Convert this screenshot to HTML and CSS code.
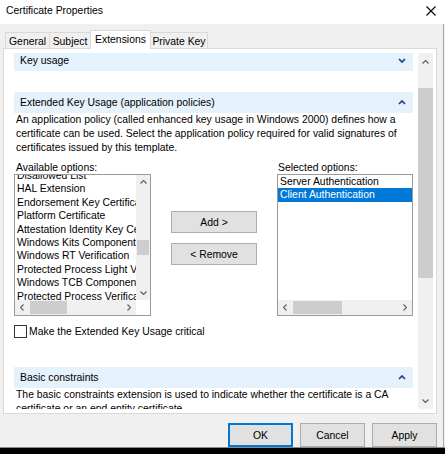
FILE: index.html
```html
<!DOCTYPE html>
<html>
<head>
<meta charset="utf-8">
<link rel="stylesheet" href="styles.css">
</head>
<body>
<div class="window">
  <div class="titlebar">
    <span class="title">Certificate Properties</span>
    <svg class="close" width="10" height="10" viewBox="0 0 10 10"><path d="M0.5 0.5 L9.5 9.5 M9.5 0.5 L0.5 9.5" stroke="#000" stroke-width="1.1" fill="none"/></svg>
  </div>
  <div class="tabs">
    <div class="tab tab-general">General</div>
    <div class="tab tab-subject">Subject</div>
    <div class="tab tab-ext active">Extensions</div>
    <div class="tab tab-pk">Private Key</div>
  </div>
  <div class="panel">
    <div class="viewport">
      <div class="content">
        <section class="sec sec-ku">
          <div class="sec-head"><span>Key usage</span>
            <svg class="chev" width="8" height="5" viewBox="0 0 8 5"><polyline points="1,1 4,4 7,1" fill="none" stroke="#1c3f94" stroke-width="1.7"/></svg>
          </div>
        </section>
        <section class="sec">
          <div class="sec-head"><span>Extended Key Usage (application policies)</span>
            <svg class="chev" width="8" height="5" viewBox="0 0 8 5"><polyline points="1,4 4,1 7,4" fill="none" stroke="#1c3f94" stroke-width="1.7"/></svg>
          </div>
          <p class="desc">An application policy (called enhanced key usage in Windows 2000) defines how a<br>certificate can be used. Select the application policy required for valid signatures of<br>certificates issued by this template.</p>
          <div class="lists">
            <div class="col">
              <div class="lbl">Available options:</div>
              <div class="listbox lb-left">
                <div class="items"><div class="items-inner shift-left">
                  <div class="item">Disallowed List</div>
                  <div class="item">HAL Extension</div>
                  <div class="item">Endorsement Key Certificate</div>
                  <div class="item">Platform Certificate</div>
                  <div class="item">Attestation Identity Key Certificate</div>
                  <div class="item">Windows Kits Component Verification</div>
                  <div class="item">Windows RT Verification</div>
                  <div class="item">Protected Process Light Verification</div>
                  <div class="item">Windows TCB Component</div>
                  <div class="item">Protected Process Verification</div>
                  <div class="item">Windows Store</div>
                </div></div>
                <div class="vs">
                  <div class="sb-btn"><svg width="7" height="4" viewBox="0 0 7 4"><polyline points="0.5,3.5 3.5,0.5 6.5,3.5" fill="none" stroke="#606060" stroke-width="1.2"/></svg></div>
                  <div class="vs-track small-track"><div class="vs-thumb small-thumb"></div></div>
                  <div class="sb-btn"><svg width="7" height="4" viewBox="0 0 7 4"><polyline points="0.5,0.5 3.5,3.5 6.5,0.5" fill="none" stroke="#606060" stroke-width="1.2"/></svg></div>
                </div>
                <div class="hs">
                  <div class="sb-btn"><svg width="4" height="7" viewBox="0 0 4 7"><polyline points="3.5,0.5 0.5,3.5 3.5,6.5" fill="none" stroke="#606060" stroke-width="1.2"/></svg></div>
                  <div class="hs-track"><div class="hs-thumb thumb-left"></div></div>
                  <div class="sb-btn"><svg width="4" height="7" viewBox="0 0 4 7"><polyline points="0.5,0.5 3.5,3.5 0.5,6.5" fill="none" stroke="#606060" stroke-width="1.2"/></svg></div>
                </div>
                <div class="corner"></div>
              </div>
            </div>
            <div class="mid">
              <button class="btn btn-mid">Add &gt;</button>
              <button class="btn btn-mid">&lt; Remove</button>
            </div>
            <div class="col">
              <div class="lbl lbl-right">Selected options:</div>
              <div class="listbox lb-right">
                <div class="items"><div class="items-inner shift-right">
                  <div class="item">Server Authentication</div>
                  <div class="item selected">Client Authentication</div>
                </div></div>
                <div class="hs">
                  <div class="sb-btn"><svg width="4" height="7" viewBox="0 0 4 7"><polyline points="3.5,0.5 0.5,3.5 3.5,6.5" fill="none" stroke="#606060" stroke-width="1.2"/></svg></div>
                  <div class="hs-track"><div class="hs-thumb thumb-right"></div></div>
                  <div class="sb-btn"><svg width="4" height="7" viewBox="0 0 4 7"><polyline points="0.5,0.5 3.5,3.5 0.5,6.5" fill="none" stroke="#606060" stroke-width="1.2"/></svg></div>
                </div>
              </div>
            </div>
          </div>
          <label class="check"><span class="box"></span><span>Make the Extended Key Usage critical</span></label>
        </section>
        <section class="sec sec-basic">
          <div class="sec-head"><span>Basic constraints</span>
            <svg class="chev" width="8" height="5" viewBox="0 0 8 5"><polyline points="1,4 4,1 7,4" fill="none" stroke="#1c3f94" stroke-width="1.7"/></svg>
          </div>
          <p class="desc">The basic constraints extension is used to indicate whether the certificate is a CA<br>certificate or an end entity certificate.</p>
        </section>
      </div>
    </div>
    <div class="vs main-vs">
      <div class="sb-btn main-btn"><svg width="7" height="4" viewBox="0 0 7 4"><polyline points="0.5,3.5 3.5,0.5 6.5,3.5" fill="none" stroke="#606060" stroke-width="1.2"/></svg></div>
      <div class="vs-track main-track"><div class="vs-thumb main-thumb"></div></div>
      <div class="sb-btn main-btn"><svg width="7" height="4" viewBox="0 0 7 4"><polyline points="0.5,0.5 3.5,3.5 6.5,0.5" fill="none" stroke="#606060" stroke-width="1.2"/></svg></div>
    </div>
  </div>
  <div class="footer">
    <button class="btn btn-foot default">OK</button>
    <button class="btn btn-foot">Cancel</button>
    <button class="btn btn-foot">Apply</button>
  </div>
</div>
</body>
</html>
```
FILE: styles.css
```css
* { box-sizing: border-box; }
html, body { margin: 0; padding: 0; }
body {
  background: #000;
  width: 445px;
  height: 454px;
  overflow: hidden;
  font-family: "Segoe UI", "Liberation Sans", Arial, sans-serif;
  font-size: 10.4px;
  color: #000;
}
.window {
  width: 445px;
  height: 448px;
  background: #f0f0f0;
  display: flex;
  flex-direction: column;
  border-bottom: 1px solid #8a8a8a;
  box-shadow: inset -1px 0 0 #f0f0f0, inset -2px 0 0 #a8a8a8;
}
.titlebar {
  height: 24px;
  flex: none;
  background: #fff;
  display: flex;
  align-items: center;
  justify-content: space-between;
  padding: 0 9px 2px 6px;
}
.title { line-height: 14px; }
.close { display: block; }

.tabs {
  height: 24px;
  flex: none;
  display: flex;
  align-items: flex-end;
  padding-left: 5px;
}
.tab {
  height: 16px;
  border: 1px solid #d9d9d9;
  border-bottom: none;
  background: #f0f0f0;
  text-align: center;
  line-height: 15px;
  padding-top: 1px;
  margin-left: -1px;
}
.tab-general { width: 45px; margin-left: 0; }
.tab-subject { width: 42px; }
.tab-ext { width: 61px; }
.tab-pk { width: 58px; }
.tab.active {
  height: 19px;
  background: #fff;
  margin-bottom: -1px;
  position: relative;
  z-index: 1;
  padding-top: 0;
  line-height: 17px;
}

.panel {
  margin-left: 3px;
  width: 434px;
  height: 366px;
  flex: none;
  border: 1px solid #d9d9d9;
  background: #fff;
  display: flex;
  gap: 5px;
  padding: 4px 2px 4px 10px;
}
.viewport {
  width: 399px;
  height: 356px;
  overflow: hidden;
  flex: none;
}
.content { margin-top: -3px; }
.sec-head {
  height: 21px;
  background: #e5f1fb;
  display: flex;
  align-items: center;
  justify-content: space-between;
  padding: 0 7px 0 6px;
}
.chev { display: block; }
.sec-ku { margin-bottom: 21px; }
.desc {
  margin: 0;
  padding-left: 2px;
  line-height: 14px;
  white-space: nowrap;
}
.lists {
  display: grid;
  grid-template-columns: 137px 1fr 136px;
  margin-top: 5px;
}
.lbl {
  height: 14px;
  line-height: 16px;
  padding-left: 2px;
}
.lbl-right { padding-left: 1px; }
.listbox {
  height: 142px;
  border: 1px solid #9a9a9a;
  background: #fff;
  display: grid;
  overflow: hidden;
}
.lb-left {
  grid-template-columns: 1fr 14px;
  grid-template-rows: 1fr 15px;
}
.lb-right {
  grid-template-columns: 1fr;
  grid-template-rows: 1fr 15px;
}
.items { overflow: hidden; min-width: 0; }
.items-inner { line-height: 13.4px; white-space: nowrap; }
.shift-left { margin-top: -6px; }
.shift-right { margin-top: 0; }
.item { padding-left: 2px; }
.item.selected { background: #0078d7; color: #fff; }

.sb-btn {
  display: flex;
  align-items: center;
  justify-content: center;
  flex: none;
  background: #f0f0f0;
}
.sb-btn svg { display: block; }
.vs {
  display: flex;
  flex-direction: column;
  background: #f0f0f0;
}
.vs > .sb-btn { height: 14px; }
.vs-track { flex: 1; background: #f0f0f0; }
.vs-thumb { background: #cdcdcd; margin: 0 1px; }
.small-track { padding-top: 51px; }
.small-thumb { height: 15px; }
.hs {
  display: flex;
  background: #f0f0f0;
}
.hs > .sb-btn { width: 14px; }
.hs-track { flex: 1; padding: 1px 0; }
.hs-thumb { height: 13px; background: #cdcdcd; }
.thumb-left { width: 37px; margin-left: 1px; }
.thumb-right { width: 49px; margin-left: 1px; }
.corner { background: #fff; }

.main-vs { width: 15px; flex: none; }
.vs > .main-btn { height: 17px; }
.main-track { padding-top: 18px; }
.main-thumb { height: 190px; margin: 0; }

.mid {
  display: flex;
  flex-direction: column;
  align-items: center;
  gap: 10px;
  padding-top: 51px;
}
.btn {
  font: inherit;
  color: #000;
  background: #e1e1e1;
  border: 1px solid #adadad;
  padding: 0;
  margin: 0;
}
.btn-mid { width: 86px; height: 22px; }

.check {
  display: flex;
  align-items: center;
  gap: 2px;
  height: 13px;
  margin-top: 9px;
}
.box {
  width: 13px;
  height: 13px;
  border: 1px solid #333;
  background: #fff;
  flex: none;
}
.sec-basic { margin-top: 29px; }

.footer {
  display: flex;
  justify-content: flex-end;
  gap: 7px;
  padding: 9px 8px 0 0;
}
.btn-foot { width: 65px; height: 24px; }
.btn-foot.default { border-color: #0078d7; box-shadow: inset 0 0 0 1px #0078d7; }
```
